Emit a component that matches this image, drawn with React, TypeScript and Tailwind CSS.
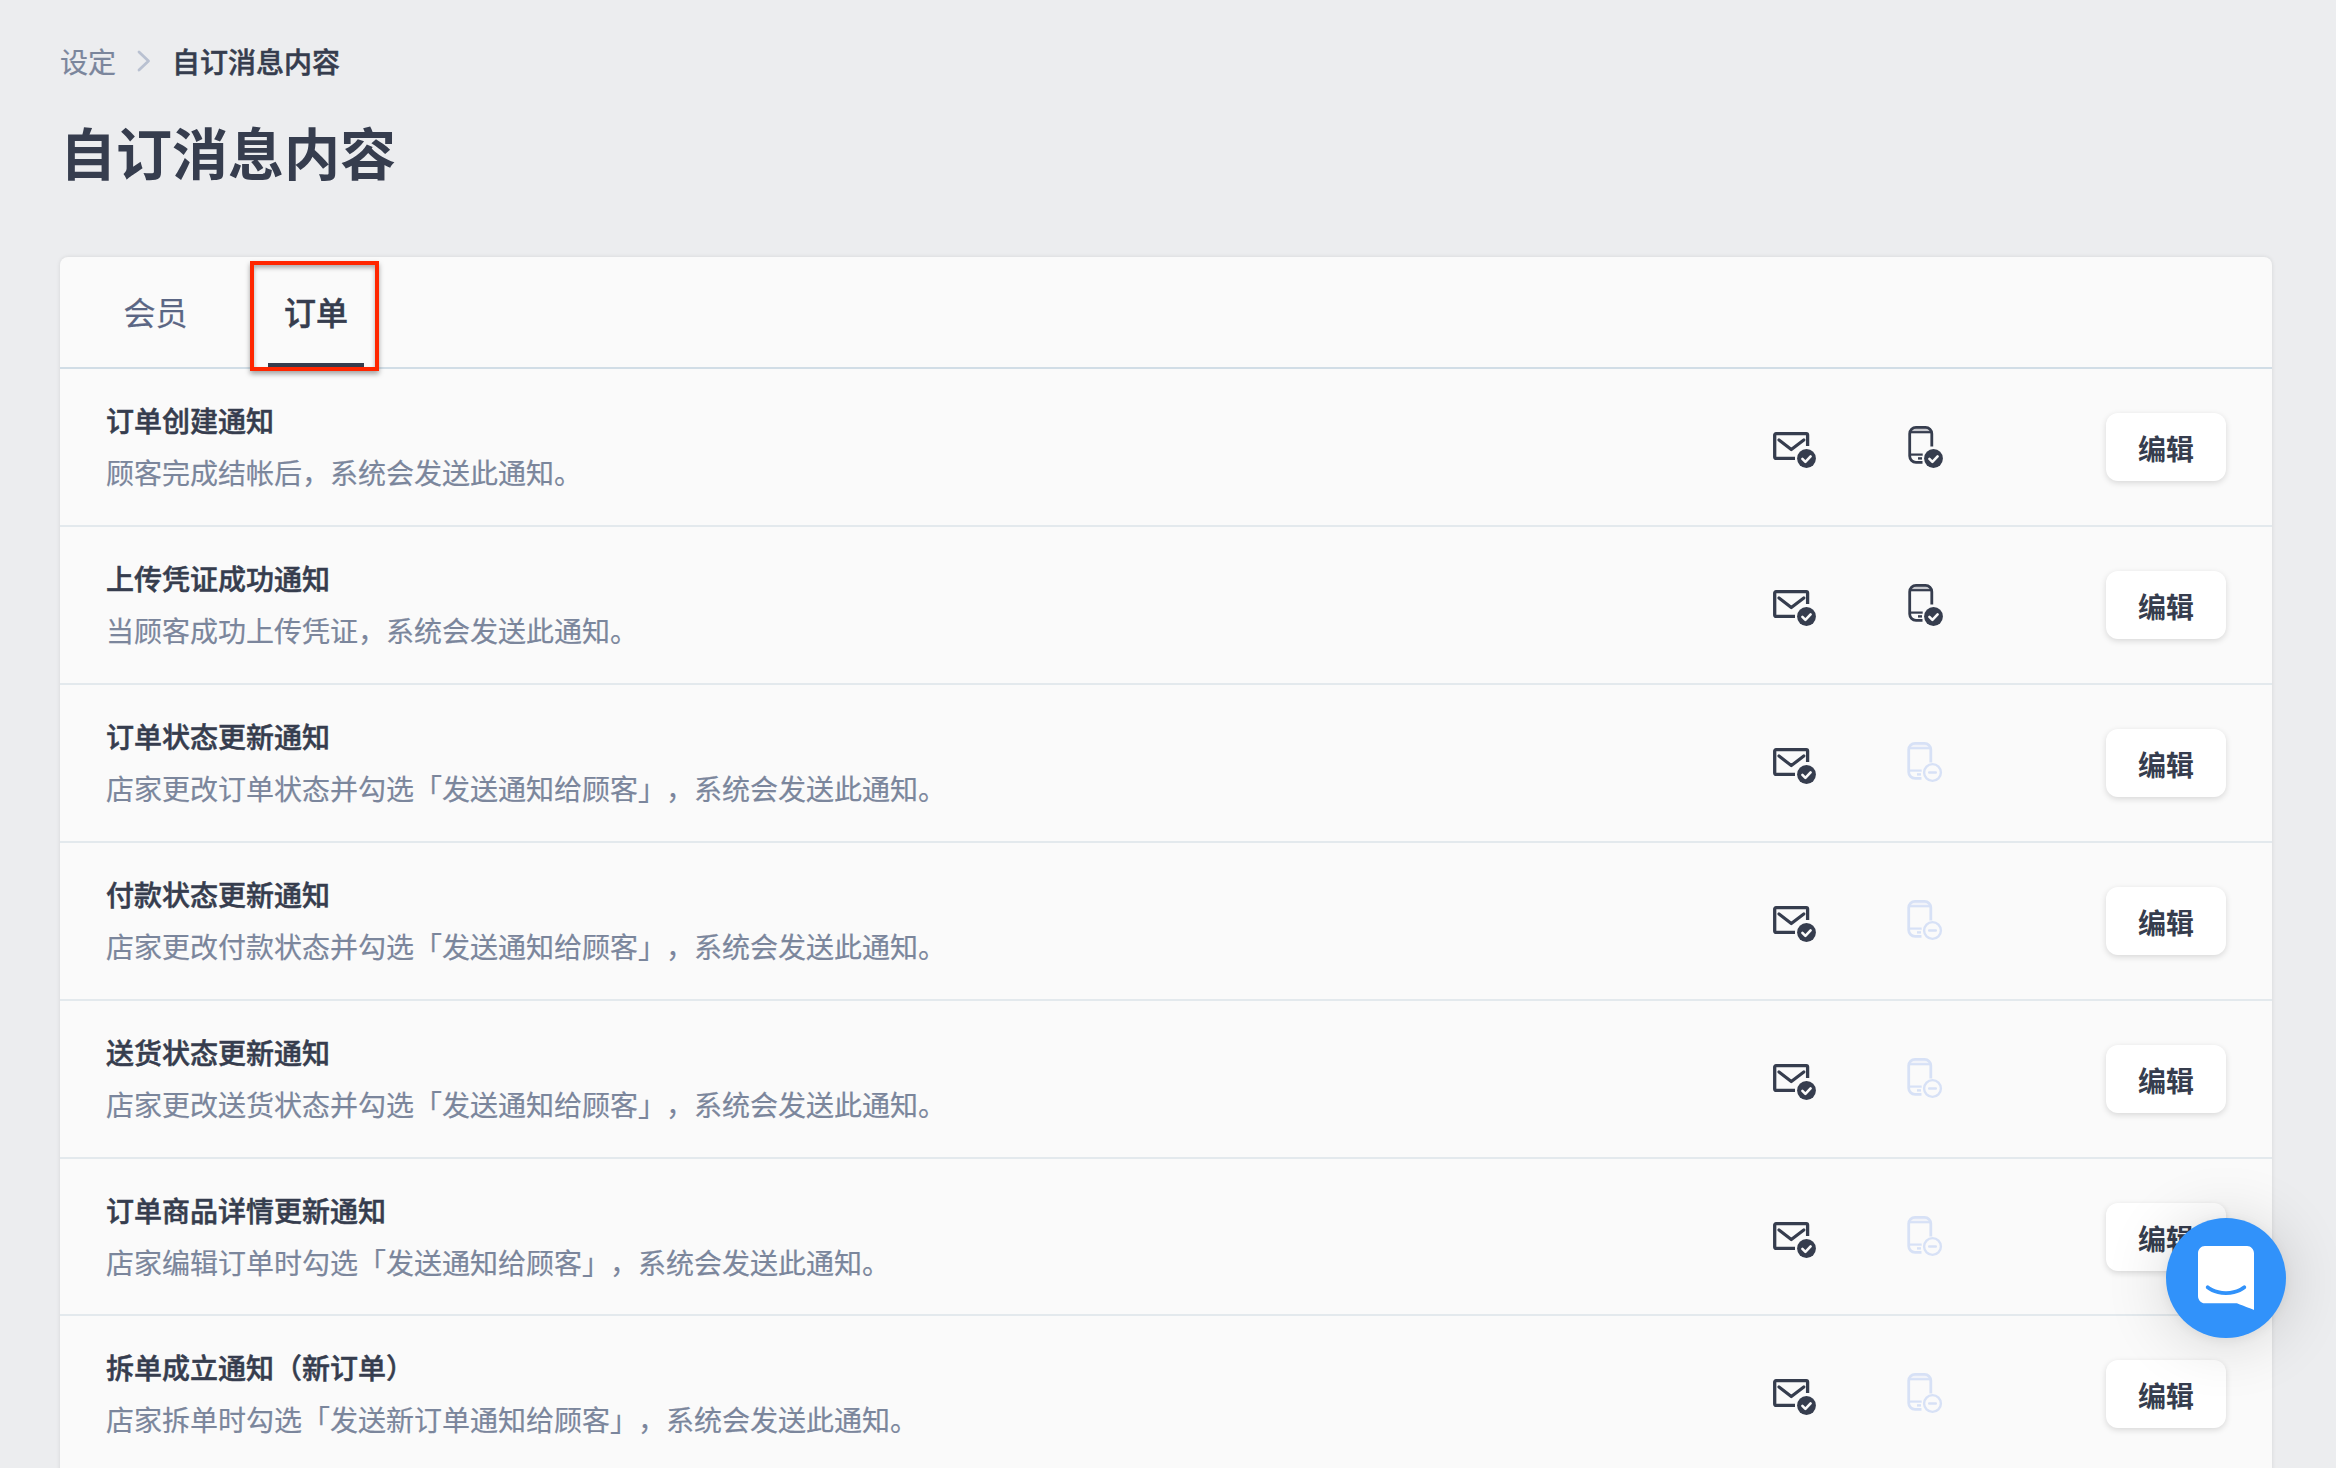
interface Notice {
  title: string;
  description: string;
  sms: boolean;
}

const NOTICES: Notice[] = [
  { title: "订单创建通知", description: "顾客完成结帐后，系统会发送此通知。", sms: true },
  { title: "上传凭证成功通知", description: "当顾客成功上传凭证，系统会发送此通知。", sms: true },
  { title: "订单状态更新通知", description: "店家更改订单状态并勾选「发送通知给顾客」，系统会发送此通知。", sms: false },
  { title: "付款状态更新通知", description: "店家更改付款状态并勾选「发送通知给顾客」，系统会发送此通知。", sms: false },
  { title: "送货状态更新通知", description: "店家更改送货状态并勾选「发送通知给顾客」，系统会发送此通知。", sms: false },
  { title: "订单商品详情更新通知", description: "店家编辑订单时勾选「发送通知给顾客」，系统会发送此通知。", sms: false },
  { title: "拆单成立通知（新订单）", description: "店家拆单时勾选「发送新订单通知给顾客」，系统会发送此通知。", sms: false },
];

const MailIcon = () => (
  <svg width="44" height="44" viewBox="0 0 44 44" fill="none" className="text-[#363d4e]">
    <path d="M22 29.4H3a1.3 1.3 0 0 1-1.3-1.3V6a1.3 1.3 0 0 1 1.3-1.3h30.3A1.3 1.3 0 0 1 34.6 6v11" stroke="currentColor" strokeWidth="3.3" />
    <path d="M6 11 18.3 20.6 30.8 11" stroke="currentColor" strokeWidth="3.2" strokeLinecap="round" strokeLinejoin="round" />
    <circle cx="33.5" cy="29.5" r="9.4" fill="currentColor" />
    <path d="m29.4 29.8 3 3 5.2-5.4" stroke="#fafafa" strokeWidth="2.6" strokeLinecap="round" strokeLinejoin="round" />
  </svg>
);

const PhoneIcon = ({ enabled }: { enabled: boolean }) => (
  <svg width="36" height="44" viewBox="0 0 36 44" fill="none" className={enabled ? "text-[#363d4e]" : "-ml-px text-[#d7e1f6]"}>
    <path d="M2 7.5C2 4 4.5 2.4 8 2.4h9.6c3.5 0 6 1.6 6 5.1Z" fill="currentColor" fillOpacity="0.25" />
    <path d="M14.5 37.3H8a6.3 6.3 0 0 1-6.3-6.3V8.7A6.3 6.3 0 0 1 8 2.4h9.5a6.3 6.3 0 0 1 6.3 6.3V21.5" stroke="currentColor" strokeWidth="2.8" />
    <path d="M2.5 7.2h20.6" stroke="currentColor" strokeWidth="2.2" />
    <path d="M2.5 29.6h12.2" stroke="currentColor" strokeWidth="2.2" />
    <path d="M10 33.4h4" stroke="currentColor" strokeWidth="2.4" />
    {enabled ? (
      <>
        <circle cx="25.5" cy="33.5" r="9.4" fill="currentColor" />
        <path d="m21.4 33.8 3 3 5.2-5.4" stroke="#fafafa" strokeWidth="2.6" strokeLinecap="round" strokeLinejoin="round" />
      </>
    ) : (
      <>
        <circle cx="25.5" cy="31.5" r="8.4" stroke="currentColor" strokeWidth="2.4" />
        <path d="M22.2 31.5h6.6" stroke="currentColor" strokeWidth="2.4" strokeLinecap="round" />
      </>
    )}
  </svg>
);

const NoticeRow = ({ notice }: { notice: Notice }) => (
  <div className="flex h-[157.91px] shrink-0 items-start border-b-2 border-[#e3e9ed] px-[46px]">
    <div className="mt-[30px] flex flex-1 flex-col gap-[10px] text-[28px] leading-[42px]">
      <h3 className="font-medium text-[#363d4e] [-webkit-text-stroke:0.5px]">{notice.title}</h3>
      <p className="text-[#7b869c] [-webkit-text-stroke:0.2px]">{notice.description}</p>
    </div>
    <div className="mt-[60px] mr-[91px] w-[44px]">
      <MailIcon />
    </div>
    <div className="mt-[56px] mr-[162px] w-[36px]">
      <PhoneIcon enabled={notice.sms} />
    </div>
    <button className="mt-[44px] h-[68px] w-[120px] rounded-xl bg-white pt-[2px] text-[28px] font-bold text-[#363d4e] shadow-[0_2px_6px_rgba(0,0,0,0.14)]">
      编辑
    </button>
  </div>
);

export default function App() {
  return (
    <div className="relative h-screen overflow-hidden bg-[#ecedef] px-[60px] pt-[40px] font-['Noto_Sans_CJK_SC',sans-serif] [text-spacing-trim:space-all]">
      {/* Breadcrumb */}
      <nav className="flex h-[42px] items-center text-[28px] leading-[42px]">
        <span className="text-[#7b869c] [-webkit-text-stroke:0.2px]">设定</span>
        <svg width="14" height="22" viewBox="0 0 14 22" fill="none" className="mr-[21px] ml-[21px]">
          <path d="m2 2 9.5 9L2 20" stroke="#b9c1d1" strokeWidth="2.8" strokeLinecap="round" strokeLinejoin="round" />
        </svg>
        <span className="font-medium text-[#363d4e] [-webkit-text-stroke:0.5px]">自订消息内容</span>
      </nav>
      <h1 className="mt-[27px] text-[56px] leading-[84px] font-bold text-[#363d4e]">自订消息内容</h1>

      <main className="mt-[64px] flex w-[2212px] flex-col rounded-t-lg bg-[#fafafa] shadow-[0_0_4px_rgba(0,0,0,0.1)]">
        {/* Tabs */}
        <div className="flex h-[112px] gap-16 border-b-2 border-[#d1dde6] pl-[48px] text-[32px]">
          <button className="w-[96px] pr-px pb-[2px] text-[#5b6684] [-webkit-text-stroke:0.2px]">会员</button>
          <button className="relative w-[96px] pb-[2px] font-medium text-[#363d4e] [-webkit-text-stroke:0.5px]">
            订单
            <span className="absolute inset-x-0 bottom-0 h-1 bg-[#363d4e]" />
            <span className="absolute top-1 -left-[18px] h-[110px] w-[129px] border-4 border-[#ff2600] shadow-[0_3px_5px_rgba(0,0,0,0.35),inset_0_3px_4px_rgba(0,0,0,0.3)]" />
          </button>
        </div>

        {NOTICES.map((n) => (
          <NoticeRow key={n.title} notice={n} />
        ))}
      </main>

      {/* Chat launcher */}
      <button className="absolute top-[1218px] left-[2166px] flex h-[120px] w-[120px] items-center justify-center rounded-full bg-[#3192fa] shadow-[0_2px_12px_rgba(0,0,0,0.06),0_4px_64px_rgba(0,0,0,0.16)]">
        <svg width="56" height="64" viewBox="0 0 28 32" fill="#fff">
          <path d="M28 32s-4.714-1.855-8.527-3.34H3.437C1.54 28.66 0 27.026 0 25.013V3.644C0 1.633 1.54 0 3.437 0h21.125c1.898 0 3.437 1.632 3.437 3.645v18.404H28V32zm-4.139-11.982a.88.88 0 00-1.292-.105c-.03.026-3.015 2.681-8.57 2.681-5.486 0-8.517-2.636-8.571-2.684a.88.88 0 00-1.29.107 1.01 1.01 0 00-.219.708.992.992 0 00.318.664c.142.128 3.537 3.15 9.762 3.15 6.226 0 9.621-3.022 9.763-3.15a.992.992 0 00.317-.664 1.01 1.01 0 00-.218-.707z" />
        </svg>
      </button>
    </div>
  );
}
